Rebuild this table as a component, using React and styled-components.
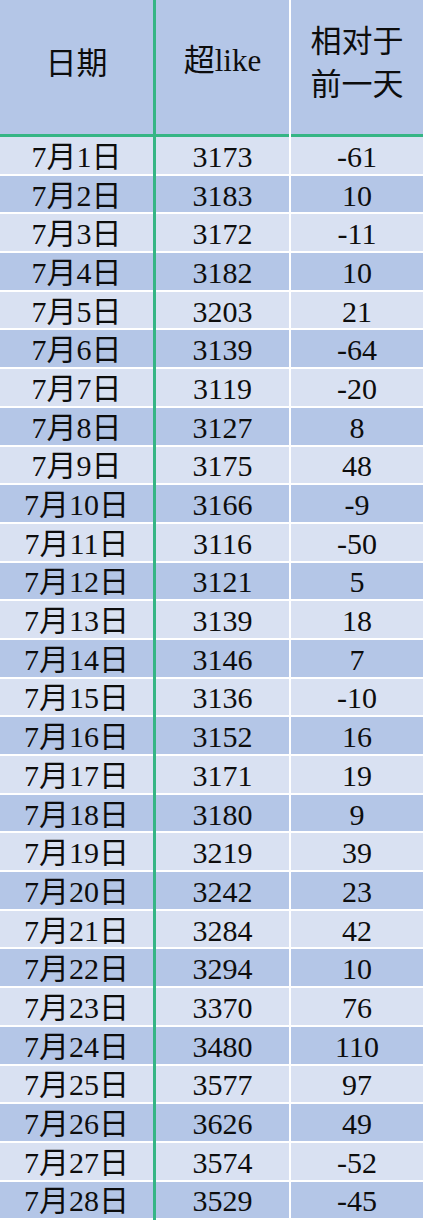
import styled, { createGlobalStyle } from 'styled-components';

const GlobalStyle = createGlobalStyle`
  html, body {
    margin: 0;
    padding: 0;
    background: #d9e1f2;
  }
`;

// 数据
const superLike = [
  3173, 3183, 3172, 3182, 3203, 3139, 3119, 3127, 3175, 3166,
  3116, 3121, 3139, 3146, 3136, 3152, 3171, 3180, 3219, 3242,
  3284, 3294, 3370, 3480, 3577, 3626, 3574, 3529,
];
const diffs = [
  -61, 10, -11, 10, 21, -64, -20, 8, 48, -9,
  -50, 5, 18, 7, -10, 16, 19, 9, 39, 23,
  42, 10, 76, 110, 97, 49, -52, -45,
];

const Tabela = styled.div`
  display: grid;
  grid-template-columns: 153px 3px 133px 2px 132px;
  grid-template-rows: 137px repeat(28, 38.7px);
  width: 423px;
  overflow: hidden;
  font-family: 'Liberation Serif', 'Noto Sans CJK SC', serif;
  color: #0d0d0d;
`;

const LinhaVerde = styled.div`
  grid-column: 2;
  grid-row: 1 / -1;
  background: #35b585;
`;

const LinhaBranca = styled.div`
  grid-column: 4;
  grid-row: 1 / -1;
  background: #ffffff;
`;

const Cabecalho = styled.div`
  box-sizing: border-box;
  background: #b4c6e7;
  border-bottom: 3px solid #35b585;
  display: flex;
  align-items: center;
  justify-content: center;
  text-align: center;
  font-size: 31px;
  line-height: 43px;
  padding-bottom: 14px;
`;

const Sans = styled.span`
  font-family: 'Noto Sans CJK SC', sans-serif;
`;

const Celula = styled.div`
  box-sizing: border-box;
  background: ${(p) => (p.$escura ? '#b4c6e7' : '#d9e1f2')};
  border-bottom: 2px solid #ffffff;
  display: flex;
  align-items: center;
  justify-content: center;
  font-size: 30px;
  line-height: 1;
  padding-top: 3px;
  white-space: nowrap;
`;

export default function App() {
  return (
    <>
      <GlobalStyle />
      <Tabela>
        <LinhaVerde />
        <LinhaBranca />
        <Cabecalho>
          <Sans>日期</Sans>
        </Cabecalho>
        <Cabecalho>超like</Cabecalho>
        <Cabecalho>
          <Sans>
            相对于
            <br />
            前一天
          </Sans>
        </Cabecalho>
        {superLike.map((v, i) => {
          const escura = i % 2 === 1;
          return [
            <Celula key={`d${i}`} $escura={escura}>
              7月{i + 1}日
            </Celula>,
            <Celula key={`v${i}`} $escura={escura}>
              {v}
            </Celula>,
            <Celula key={`x${i}`} $escura={escura}>
              {diffs[i]}
            </Celula>,
          ];
        })}
      </Tabela>
    </>
  );
}
